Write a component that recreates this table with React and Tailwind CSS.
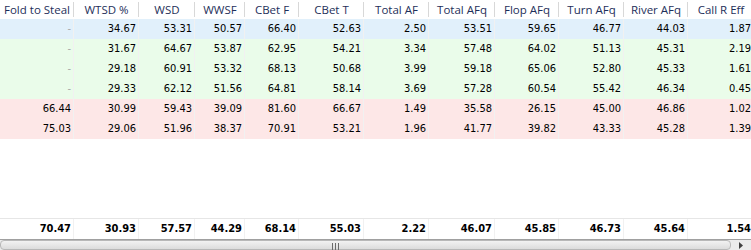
const columns = [
  { label: 'Fold to Steal', w: 'w-[74px]' },
  { label: 'WTSD %', w: 'w-[65px]' },
  { label: 'WSD', w: 'w-[56px]' },
  { label: 'WWSF', w: 'w-[50px]' },
  { label: 'CBet F', w: 'w-[54px]' },
  { label: 'CBet T', w: 'w-[65px]' },
  { label: 'Total AF', w: 'w-[65px]' },
  { label: 'Total AFq', w: 'w-[66px]' },
  { label: 'Flop AFq', w: 'w-[64px]' },
  { label: 'Turn AFq', w: 'w-[65px]' },
  { label: 'River AFq', w: 'w-[64px]' },
  { label: 'Call R Eff', w: 'w-[66px]' },
];

// 행 색상: 파랑(현재), 초록, 빨강
const rows = [
  { bg: 'bg-[#e1f0fb]', cells: ['-', '34.67', '53.31', '50.57', '66.40', '52.63', '2.50', '53.51', '59.65', '46.77', '44.03', '1.87'] },
  { bg: 'bg-[#eafcea]', cells: ['-', '31.67', '64.67', '53.87', '62.95', '54.21', '3.34', '57.48', '64.02', '51.13', '45.31', '2.19'] },
  { bg: 'bg-[#eafcea]', cells: ['-', '29.18', '60.91', '53.32', '68.13', '50.68', '3.99', '59.18', '65.06', '52.80', '45.33', '1.61'] },
  { bg: 'bg-[#eafcea]', cells: ['-', '29.33', '62.12', '51.56', '64.81', '58.14', '3.69', '57.28', '60.54', '55.42', '46.34', '0.45'] },
  { bg: 'bg-[#fde7e7]', cells: ['66.44', '30.99', '59.43', '39.09', '81.60', '66.67', '1.49', '35.58', '26.15', '45.00', '46.86', '1.02'] },
  { bg: 'bg-[#fde7e7]', cells: ['75.03', '29.06', '51.96', '38.37', '70.91', '53.21', '1.96', '41.77', '39.82', '43.33', '45.28', '1.39'] },
];

const totals = ['70.47', '30.93', '57.57', '44.29', '68.14', '55.03', '2.22', '46.07', '45.85', '46.73', '45.64', '1.54'];

const cellFont = { fontFamily: '"DejaVu Sans Condensed", "DejaVu Sans", sans-serif' };

function Cell({ w, value, bold }) {
  return (
    <div
      className={`${w} shrink-0 h-full flex items-center justify-end pr-[2px] border-r border-[#f1f1f1] text-[11px] ${
        value === '-' ? 'text-[#a8a8a8]' : 'text-black'
      } ${bold ? 'font-bold' : ''}`}
    >
      {value}
    </div>
  );
}

export default function App() {
  return (
    <div className="w-[751px] h-[250px] overflow-hidden bg-white flex flex-col" style={cellFont}>
      {/* 헤더 */}
      <div className="flex h-[19px] shrink-0 bg-white" style={{ fontFamily: '"Open Sans", "Noto Sans", sans-serif' }}>
        {columns.map((c) => (
          <div key={c.label} className={`${c.w} shrink-0 h-full flex items-center justify-center relative text-[11.5px] text-[#1e2f5a] whitespace-nowrap`}>
            {c.label}
            <span className="absolute right-0 top-[2px] bottom-[2px] w-px bg-[#d8d8d8]" />
          </div>
        ))}
      </div>

      {/* 데이터 행 */}
      {rows.map((r, i) => (
        <div key={i} className={`flex h-[20px] shrink-0 ${r.bg}`}>
          {r.cells.map((v, j) => (
            <Cell key={j} w={columns[j].w} value={v} />
          ))}
        </div>
      ))}

      <div className="flex-1" />

      {/* 합계 */}
      <div className="flex h-[21px] shrink-0 border-t border-[#e6e6e6] bg-white">
        {totals.map((v, j) => (
          <Cell key={j} w={columns[j].w} value={v} bold />
        ))}
      </div>

      {/* 가로 스크롤바 */}
      <div className="h-[11px] shrink-0 flex border-t border-[#a0a0a0] bg-[#ebebeb]">
        <div className="w-[731px] h-full rounded-sm border border-[#b8b8b8] bg-gradient-to-b from-[#f2f2f2] to-[#dcdcdc] flex justify-center pt-[2px]">
          <div className="flex gap-[2px] ml-[-60px] h-[7px]">
            <span className="w-px h-full bg-[#6a6a6a]" />
            <span className="w-px h-full bg-[#6a6a6a]" />
            <span className="w-px h-full bg-[#6a6a6a]" />
          </div>
        </div>
        <div className="flex-1 flex items-center justify-center">
          <svg width="4" height="7" viewBox="0 0 4 7">
            <path d="M0 0 L4 3.5 L0 7 Z" fill="#404040" />
          </svg>
        </div>
      </div>
    </div>
  );
}
